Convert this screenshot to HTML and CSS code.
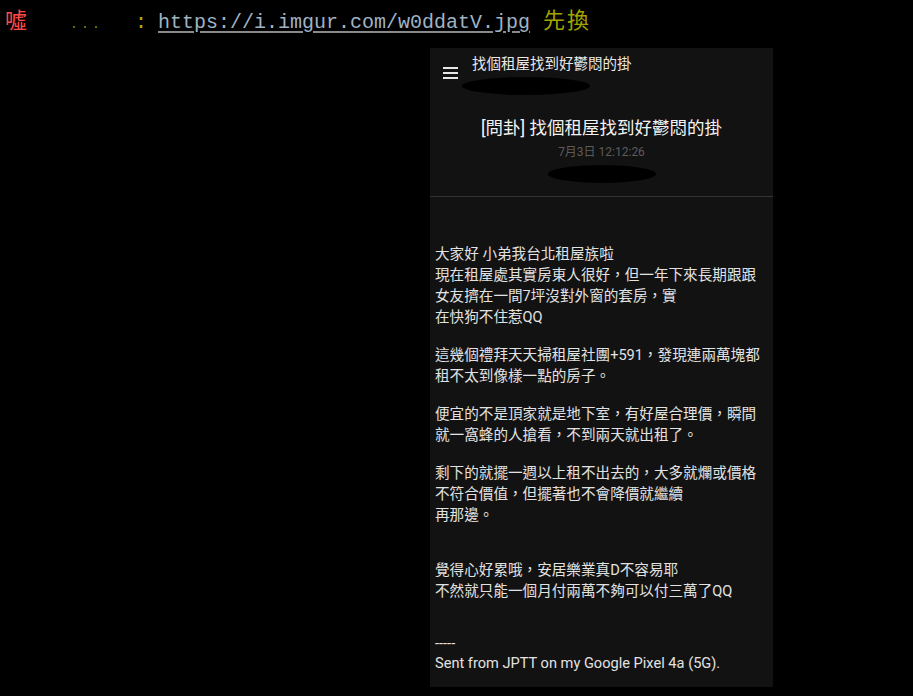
FILE: index.html
```html
<!DOCTYPE html>
<html lang="zh-Hant">

<head>
    <meta charset="UTF-8" />
    <meta name="viewport" content="width=device-width, initial-scale=1.0" />
    <title>找個租屋找到好鬱悶的掛</title>
    <link rel="stylesheet" href="styles.css">
</head>

<body>
    <div class="push-line">
        <span class="push-tag">噓</span>
        <span class="push-id"><i class="dot"></i><i class="dot"></i><i class="dot"></i></span>
        <span class="push-colon">:</span>
        <a class="push-url" href="#">https://i.imgur.com/w0ddatV.jpg</a>
        <span class="push-note">先換</span>
    </div>

    <div class="phone">
        <div class="appbar">
            <div class="menu-icon">
                <span></span><span></span><span></span>
            </div>
            <div class="appbar-title">找個租屋找到好鬱悶的掛</div>
        </div>
        <div class="blot blot-author"></div>

        <div class="post-head">
            <h1 class="post-title">[問卦] 找個租屋找到好鬱悶的掛</h1>
            <div class="post-date">7月3日 12:12:26</div>
            <div class="blot blot-board"></div>
        </div>

        <div class="post-body">
            <p>大家好 小弟我台北租屋族啦<br>現在租屋處其實房東人很好，但一年下來長期跟跟<br>女友擠在一間7坪沒對外窗的套房，實<br>在快狗不住惹QQ</p>
            <p>這幾個禮拜天天掃租屋社團+591，發現連兩萬塊都<br>租不太到像樣一點的房子。</p>
            <p>便宜的不是頂家就是地下室，有好屋合理價，瞬間<br>就一窩蜂的人搶看，不到兩天就出租了。</p>
            <p>剩下的就擺一週以上租不出去的，大多就爛或價格<br>不符合價值，但擺著也不會降價就繼續<br>再那邊。</p>
            <p class="far">覺得心好累哦，安居樂業真D不容易耶<br>不然就只能一個月付兩萬不夠可以付三萬了QQ</p>
            <p class="sig">-----<br>Sent from JPTT on my Google Pixel 4a (5G).</p>
        </div>
    </div>
</body>

</html>
```

FILE: styles.css
```css
body {
    margin: 0;
    background: #000;
    font-family: Roboto, "Noto Sans CJK TC", sans-serif;
    width: 913px;
    height: 696px;
    overflow: hidden;
}

/* 推文列 */
.push-line {
    height: 48px;
    display: flex;
    align-items: baseline;
    padding: 3px 0 0 5px;
    box-sizing: border-box;
    font-family: "Liberation Mono", "Noto Sans CJK TC", monospace;
    font-size: 20px;
    line-height: 30px;
}

.push-tag {
    color: #ff4a4a;
    font-size: 22px;
    font-family: "Noto Sans CJK TC", sans-serif;
}

.push-id {
    width: 108px;
    display: inline-flex;
    gap: 9px;
    padding-left: 46px;
    box-sizing: border-box;
}

.push-id .dot {
    width: 2px;
    height: 2px;
    background: #6a6a00;
}

.push-colon {
    color: #b0b000;
}

.push-url {
    margin-left: 11px;
    color: #9fb3c3;
    text-decoration: underline;
    text-decoration-color: #8a8a8a;
    text-underline-offset: 3px;
}

.push-note {
    margin-left: 13px;
    color: #a3a300;
    font-size: 22px;
    letter-spacing: 2px;
    font-family: "Noto Sans CJK TC", sans-serif;
}

/* 手機截圖 */
.phone {
    margin-left: 430px;
    width: 343px;
    height: 639px;
    background: #121212;
    overflow: hidden;
}

.appbar {
    display: flex;
    align-items: flex-start;
    gap: 14px;
    padding: 7px 0 0 13px;
}

.menu-icon {
    display: flex;
    flex-direction: column;
    gap: 3px;
    margin-top: 12px;
}

.menu-icon span {
    width: 15px;
    height: 2px;
    background: #e6e6e6;
}

.appbar-title {
    color: #e8e8e8;
    font-size: 14.5px;
    line-height: 20px;
}

.blot {
    background: #000;
    border-radius: 50%;
}

.blot-author {
    width: 128px;
    height: 18px;
    margin: -2px 0 0 32px;
}

.post-head {
    text-align: center;
    padding: 19px 0 13px;
    border-bottom: 1px solid #333;
}

.post-title {
    margin: 0;
    color: #f2f2f2;
    font-size: 17.5px;
    font-weight: normal;
    line-height: 28px;
}

.post-date {
    color: #5c5c5c;
    font-size: 12px;
    line-height: 18px;
    margin-top: 1px;
}

.blot-board {
    width: 108px;
    height: 18px;
    margin: 4px auto 0;
}

.post-body {
    padding: 47px 5px 0;
    color: #e2e2e2;
    font-size: 14.6px;
    line-height: 21px;
}

.post-body p {
    margin: 0 0 17px;
}

.post-body p.far {
    margin-top: 34px;
}

.post-body p.sig {
    margin-top: 31px;
    line-height: 20px;
}
```
